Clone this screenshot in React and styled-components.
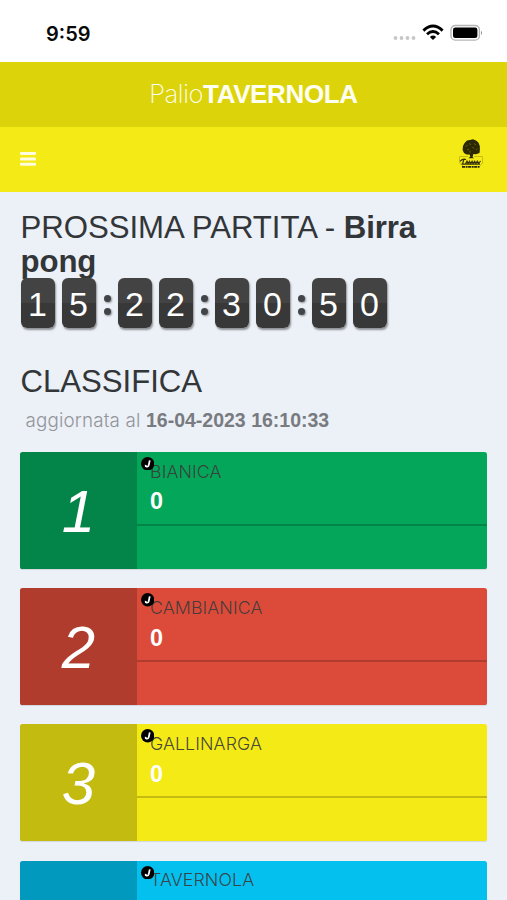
import React from "react";
import styled, { createGlobalStyle } from "styled-components";

const GlobalStyle = createGlobalStyle`
  * { box-sizing: border-box; }
  html, body { margin: 0; height: 900px; overflow: hidden; background: #ecf0f7; }
  body { font-family: "Liberation Sans", Arial, sans-serif; color: #333638; }
`;

const Screen = styled.div`
  width: 507px;
  height: 900px;
  overflow: hidden;
  background: #ecf0f7;
`;

const StatusBar = styled.div`
  height: 62px;
  padding: 5px 24px 0 46px;
  display: flex;
  align-items: center;
  justify-content: space-between;
  background: #fff;
`;

const Clock = styled.span`
  font: 600 20px/24px Inter, sans-serif;
  letter-spacing: 0;
  color: #0a0a0a;
`;

const StatusIcons = styled.svg`
  display: block;
  width: 92px;
  height: 20px;
`;

const BrandBar = styled.div`
  height: 64.5px;
  display: flex;
  align-items: center;
  justify-content: center;
  background: #dcd30b;
  color: #fffff2;
  font-size: 26px;
  line-height: 30px;
`;

const BrandLight = styled.span`
  font-family: Inter, sans-serif;
  font-weight: 200;
  font-size: 25.5px;
  letter-spacing: -0.4px;
`;

const BrandBold = styled.b`
  letter-spacing: -0.35px;
`;

const NavBar = styled.div`
  height: 65px;
  padding: 0 23px 0 20px;
  display: flex;
  align-items: center;
  justify-content: space-between;
  background: #f4ea15;
`;

const MenuIcon = styled.svg`
  width: 16px;
  height: 14px;
`;

const Crest = styled.svg`
  width: 26px;
  height: 32px;
  margin-bottom: 10px;
`;

const Content = styled.main`
  padding: 19.5px 20px 0 20px;
`;

const Title = styled.h1`
  margin: 0 0 0 0.5px;
  font-size: 31.2px;
  line-height: 34.3px;
  font-weight: 400;
  letter-spacing: -0.04px;

  b { letter-spacing: -0.1px; }
`;

const Countdown = styled.div`
  display: flex;
  align-items: center;
  margin: -1.3px 0 0 0.5px;
`;

const DigitPair = styled.div`
  display: flex;
  gap: 7px;
`;

const Digit = styled.span`
  width: 34px;
  height: 50px;
  border-radius: 6px;
  background: linear-gradient(#434343 0 50%, #383838 50% 100%);
  box-shadow: 1px 2px 2px rgba(0, 0, 0, 0.4);
  color: #fff;
  font-size: 34px;
  line-height: 52px;
  text-align: center;
`;

const Colon = styled.div`
  width: 22px;
  height: 50px;
  padding: 3px 0 0 1px;
  display: flex;
  flex-direction: column;
  align-items: center;
  justify-content: center;
  gap: 6px;
`;

const Dot = styled.i`
  width: 7px;
  height: 7px;
  border-radius: 50%;
  background: #414548;
  box-shadow: 1px 1px 2px rgba(0, 0, 0, 0.4);
`;

const Ranking = styled.section`
  padding-top: 36.9px;
`;

const Updated = styled.p`
  margin: 9.5px 0 0 5.5px;
  font-size: 19.5px;
  line-height: 22px;
  color: #787b7f;
`;

const UpdatedLight = styled.span`
  font-family: Inter, sans-serif;
  font-weight: 300;
  font-size: 18.8px;
  letter-spacing: 0.17px;
  color: #929599;
`;

const TeamList = styled.div`
  display: flex;
  flex-direction: column;
  gap: 19.2px;
  padding-top: 20.1px;
`;

const TeamCard = styled.article`
  height: 117px;
  display: flex;
  flex-shrink: 0;
  overflow: hidden;
  border-radius: 2.6px;
  background: ${(p) => p.$color};
  box-shadow: 0 1px 1px rgba(0, 0, 0, 0.1);
`;

const Position = styled.div`
  width: 117px;
  flex-shrink: 0;
  background: rgba(0, 0, 0, 0.2);
  color: #fff;
  font-size: 60px;
  font-style: italic;
  line-height: 119px;
  text-align: center;
`;

const TeamInfo = styled.div`
  position: relative;
  flex: 1;
  padding: 8.5px 0 0 13px;
`;

const TeamName = styled.div`
  font-family: Inter, sans-serif;
  font-weight: 300;
  font-size: 17.8px;
  line-height: 22px;
  letter-spacing: 0.09px;
  color: rgba(60, 60, 60, 0.95);
`;

const Score = styled.div`
  height: 41px;
  padding-top: 4.9px;
  font-size: 23.4px;
  line-height: 28px;
  font-weight: 700;
  color: #fff;
`;

const Divider = styled.div`
  height: 2px;
  margin-left: -13px;
  background: rgba(0, 0, 0, 0.2);
`;

const Joker = styled.svg`
  position: absolute;
  left: 4px;
  top: 5px;
  width: 13.4px;
  height: 13.4px;
`;

const pairs = ["15", "22", "30", "50"];

const teams = [
  { name: "BIANICA", color: "#04a65a", score: 0 },
  { name: "CAMBIANICA", color: "#dc4b39", score: 0 },
  { name: "GALLINARGA", color: "#f4ea15", score: 0 },
  { name: "TAVERNOLA", color: "#03c0ef", score: 0 },
];

function DeviceStatus() {
  return (
    <StatusIcons viewBox="0 0 92 20">
      <g fill="#c7c7c7">
        <circle cx="4.5" cy="14" r="1.9" />
        <circle cx="10.5" cy="14" r="1.9" />
        <circle cx="16.5" cy="14" r="1.9" />
        <circle cx="22.5" cy="14" r="1.9" />
      </g>
      <g fill="none" stroke="#000" strokeWidth="2.9">
        <path d="M32.4 6.6 Q42 -2.4 51.6 6.6" />
        <path d="M36 10.3 Q42 4.8 48 10.3" />
      </g>
      <path d="M38.9 13 Q42 10.2 45.1 13 L42 16.1Z" />
      <rect x="60" y="1.5" width="28.4" height="14.6" rx="4.2" fill="#fff" stroke="#b5b5b5" strokeWidth="1.4" />
      <rect x="62" y="3.5" width="24.4" height="10.6" rx="2.3" />
      <path d="M90 6.7 Q92 8.8 90 10.9Z" fill="#888" />
    </StatusIcons>
  );
}

function TreeCrest() {
  return (
    <Crest viewBox="0 0 26 32">
      <path
        fill="#2b2803"
        d="M6 15 L4.6 12 5 8 6.6 5 9 2.6 12 2 15 1.3 18 2.4 20.4 4.6 21.8 8 21.9 11.5 21.5 15 18 16.2 15.4 16 14.6 19 16 20.3 H10.5 L12.3 18.6 11.6 16.5 8.5 16.4Z"
      />
      <path
        fill="none"
        stroke="#817a09"
        strokeWidth="0.7"
        d="M7.5 8.5l2-1.4M11 5.6l2 1M16 5.5l2 1.6M9 12l2-1M14.3 9.2l2 1.2M18 12l1.6-1.2M12 12.7v2"
      />
      <path fill="none" stroke="#c4ba10" strokeWidth="0.9" d="M1.5 18.5H10M16 18.5H24.5M1.5 18.5V25L5 28M24.5 18.5V25L21 29" />
      <path
        fill="none"
        stroke="#39350a"
        strokeWidth="1.2"
        d="M2 23.4 Q5 20.2 8 21.5M5.8 21.3L4.6 26M7.6 25.6l1.4-2.4 1 2.4 1.5-2.4 1 2.5 1.6-2.4 1 2.3 1.6-2.3 1 2.3 1.7-2.4 1.2 2.3 2-2.5M3.5 26.2H22"
      />
      <path fill="none" stroke="#2b2803" strokeWidth="1.8" strokeDasharray="3 .6 2 .5" d="M4 28.8H21.5" />
    </Crest>
  );
}

export default function App() {
  return (
    <>
      <GlobalStyle />
      <Screen>
        <StatusBar>
          <Clock>9:59</Clock>
          <DeviceStatus />
        </StatusBar>
        <BrandBar>
          <BrandLight>Palio</BrandLight>
          <BrandBold>TAVERNOLA</BrandBold>
        </BrandBar>
        <NavBar>
          <MenuIcon viewBox="0 0 16 14" fill="#fffde0">
            <rect width="16" height="3" rx="1" />
            <rect y="5.4" width="16" height="3" rx="1" />
            <rect y="10.8" width="16" height="3" rx="1" />
          </MenuIcon>
          <TreeCrest />
        </NavBar>
        <Content>
          <Title>
            PROSSIMA PARTITA - <b>Birra<br />pong</b>
          </Title>
          <Countdown>
            {pairs.map((pair, i) => (
              <React.Fragment key={i}>
                {i > 0 && (
                  <Colon>
                    <Dot />
                    <Dot />
                  </Colon>
                )}
                <DigitPair>
                  <Digit>{pair[0]}</Digit>
                  <Digit>{pair[1]}</Digit>
                </DigitPair>
              </React.Fragment>
            ))}
          </Countdown>
          <Ranking>
            <Title>CLASSIFICA</Title>
            <Updated>
              <UpdatedLight>aggiornata al </UpdatedLight>
              <b>16-04-2023 16:10:33</b>
            </Updated>
            <TeamList>
              {teams.map((team, i) => (
                <TeamCard key={team.name} $color={team.color}>
                  <Position>{i + 1}</Position>
                  <TeamInfo>
                    <TeamName>{team.name}</TeamName>
                    <Score>{team.score}</Score>
                    <Divider />
                    <Joker viewBox="0 0 13 13">
                      <circle cx="6.5" cy="6.5" r="6.5" />
                      <path d="M8.5 3.3 L7.5 8 Q7 9.7 5.4 9.4 Q4.2 9.1 4.5 7.6" fill="none" stroke="#fff" strokeWidth="1.7" />
                    </Joker>
                  </TeamInfo>
                </TeamCard>
              ))}
            </TeamList>
          </Ranking>
        </Content>
      </Screen>
    </>
  );
}
